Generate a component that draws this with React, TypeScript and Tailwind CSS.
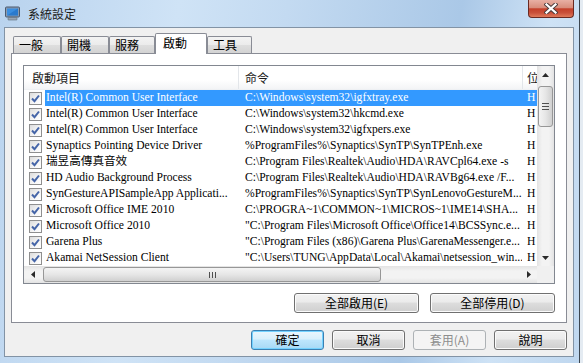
import React from 'react';

const rows: [string, string][] = [
  ['Intel(R) Common User Interface', String.raw`C:\Windows\system32\igfxtray.exe`],
  ['Intel(R) Common User Interface', String.raw`C:\Windows\system32\hkcmd.exe`],
  ['Intel(R) Common User Interface', String.raw`C:\Windows\system32\igfxpers.exe`],
  ['Synaptics Pointing Device Driver', String.raw`%ProgramFiles%\Synaptics\SynTP\SynTPEnh.exe`],
  ['瑞昱高傳真音效', String.raw`C:\Program Files\Realtek\Audio\HDA\RAVCpl64.exe -s`],
  ['HD Audio Background Process', String.raw`C:\Program Files\Realtek\Audio\HDA\RAVBg64.exe /F...`],
  ['SynGestureAPISampleApp Applicati...', String.raw`%ProgramFiles%\Synaptics\SynTP\SynLenovoGestureM...`],
  ['Microsoft Office IME 2010', String.raw`C:\PROGRA~1\COMMON~1\MICROS~1\IME14\SHA...`],
  ['Microsoft Office 2010', String.raw`"C:\Program Files\Microsoft Office\Office14\BCSSync.e...`],
  ['Garena Plus', String.raw`"C:\Program Files (x86)\Garena Plus\GarenaMessenger.e...`],
  ['Akamai NetSession Client', String.raw`"C:\Users\TUNG\AppData\Local\Akamai\netsession_win...`],
];

const tabs = [
  { label: '一般', w: 'w-[48px]' },
  { label: '開機', w: 'w-[48px]' },
  { label: '服務', w: 'w-[46px]' },
  { label: '啟動', w: 'w-[52px]', active: true },
  { label: '工具', w: 'w-[45px]' },
];

const CheckBox = () => (
  <div className="w-[13px] h-[13px] border border-[#8f8f8f] bg-[linear-gradient(135deg,#dcdcdc,#f6f6f6_60%,#ffffff)] flex items-center justify-center">
    <svg width="11" height="11" viewBox="0 0 11 11">
      <path d="M2 5.5 L4.5 8.2 L9 2.5" fill="none" stroke="#4565a8" strokeWidth="2" />
    </svg>
  </div>
);

const Arrow = ({ dir }: { dir: 'up' | 'down' | 'left' | 'right' }) => {
  const d = {
    up: 'M0 4 L3.5 0 L7 4 Z',
    down: 'M0 0 L7 0 L3.5 4 Z',
    left: 'M4 0 L4 7 L0 3.5 Z',
    right: 'M0 0 L4 3.5 L0 7 Z',
  }[dir];
  const horiz = dir === 'left' || dir === 'right';
  return (
    <svg width={horiz ? 4 : 7} height={horiz ? 7 : 4} viewBox={horiz ? '0 0 4 7' : '0 0 7 4'}>
      <path d={d} fill="#2b2b2b" />
    </svg>
  );
};

function Button({ label, variant = 'normal', w }: { label: string; variant?: 'normal' | 'default' | 'disabled'; w: string }) {
  const styles = {
    normal:
      'border-[#707070] bg-[linear-gradient(to_bottom,#f2f2f2_0%,#ebebeb_45%,#dddddd_50%,#cfcfcf_100%)] text-black shadow-[inset_0_0_0_1px_#fbfbfb]',
    default:
      'border-[#3c7fb1] bg-[linear-gradient(to_bottom,#eaf6fd_0%,#d9f0fc_45%,#bee6fd_50%,#a7d9f5_100%)] text-black shadow-[inset_0_0_0_1px_#74d2ff]',
    disabled: 'border-[#adb2b5] bg-[#f4f4f4] text-[#8d8d8d]',
  }[variant];
  return (
    <div className={`${w} h-[20px] rounded-[3px] border flex items-center justify-center text-[12px] leading-[16px] ${styles}`}>
      {label}
    </div>
  );
}

export default function App() {
  return (
    <div className="w-[583px] h-[363px] overflow-hidden flex font-['Noto_Sans_CJK_TC','Noto_Sans',sans-serif] text-black">
      <div className="w-[579px] h-full flex flex-col bg-[linear-gradient(100deg,#b9d3ee_0%,#cfe3f6_28%,#c3daf1_45%,#aac8e7_72%,#cee2f5_86%,#bfd7ef_100%)]">
        {/* title bar */}
        <div className="h-[27px] flex">
          <div className="flex items-center pl-[5px] gap-[8px] h-[27px]">
            <svg width="15" height="15" viewBox="0 0 15 15">
              <rect x="0.5" y="1" width="14" height="10" rx="1" fill="#8a9bb0" stroke="#4b5b70" />
              <rect x="2" y="2.5" width="11" height="7" fill="#3a8ee0" />
              <path d="M2 9.5 L13 2.5 L13 9.5 Z" fill="#1f6dc0" opacity="0.6" />
              <rect x="3" y="11.5" width="9" height="2.5" rx="0.5" fill="#9aa6b4" stroke="#5d6b7b" strokeWidth="0.6" />
            </svg>
            <span className="text-[12px] leading-[16px] text-[#1b1b1b] pt-[1px]">系統設定</span>
          </div>
          <div className="flex-1" />
          <div className="w-[46px] h-[18px] rounded-b-[4px] border border-t-0 border-[#6a2a22] bg-[linear-gradient(to_bottom,#e8b0a4_0%,#d88d7c_45%,#c4402a_52%,#c9503a_75%,#e07a5a_100%)] flex items-center justify-center">
            <svg width="14" height="11" viewBox="0 0 14 11">
              <path d="M2.5 1.5 L11.5 9.5 M11.5 1.5 L2.5 9.5" stroke="#4a3b3b" strokeWidth="4.2" strokeLinecap="square" />
              <path d="M2.5 1.5 L11.5 9.5 M11.5 1.5 L2.5 9.5" stroke="#ffffff" strokeWidth="2.3" strokeLinecap="square" />
            </svg>
          </div>
          <div className="w-[5px]" />
        </div>

        {/* middle */}
        <div className="flex h-[330px]">
          <div className="w-[4px]" />
          <div className="w-[570px] h-[330px] border border-[#8293a5] bg-[#f0f0f0] px-[6px] pt-[5px]">
            {/* tabs */}
            <div className="flex items-end h-[20px] pl-[2px]">
              {tabs.map((t) =>
                t.active ? (
                  <div
                    key={t.label}
                    className={`relative z-10 -mb-px ${t.w} h-[21px] border border-b-0 border-[#898c95] rounded-t-[2px] bg-white pl-[7px] pt-[1px] text-[12px] leading-[16px]`}
                  >
                    {t.label}
                  </div>
                ) : (
                  <div
                    key={t.label}
                    className={`${t.w} h-[17px] border border-b-0 border-[#898c95] rounded-t-[2px] bg-[linear-gradient(to_bottom,#f3f3f3_0%,#ebebeb_50%,#dedede_51%,#d3d3d3_100%)] pl-[5px] text-[12px] leading-[16px]`}
                  >
                    {t.label}
                  </div>
                )
              )}
            </div>

            {/* panel */}
            <div className="h-[270px] border border-[#898c95] bg-white pt-[11px] px-[11px]">
              <div className="w-[532px] h-[219px] border border-[#828790] bg-white flex flex-col">
                <div className="flex h-[200px]">
                  <div className="w-[513px] overflow-hidden flex flex-col">
                    {/* header */}
                    <div className="h-[24px] flex items-stretch bg-[linear-gradient(to_bottom,#ffffff_0%,#ffffff_60%,#f3f4f6_100%)] border-b border-[#eef0f3] text-[12px] text-[#1a1a1a]">
                      <div className="w-[214px] shrink-0 pl-[8px] flex items-center">啟動項目</div>
                      <div className="w-[284px] shrink-0 pl-[6px] flex items-center border-l border-[#e3e6ea]">命令</div>
                      <div className="w-[15px] shrink-0 pl-[4px] flex items-center border-l border-[#e3e6ea] overflow-hidden whitespace-nowrap">位</div>
                    </div>
                    {/* rows */}
                    <div className="font-['Liberation_Serif','Noto_Sans_CJK_TC',serif] text-[11.6px] leading-[16px]">
                      {rows.map(([name, cmd], i) => (
                        <div key={i} className="h-[16px] flex">
                          <div className="w-[21px] shrink-0 pl-[5px] flex items-center">
                            <CheckBox />
                          </div>
                          <div className={`flex w-[492px] shrink-0 ${i === 0 ? 'bg-[#3399ff] text-white' : ''}`}>
                            <div className="w-[193px] shrink-0 pl-[1px] whitespace-nowrap overflow-hidden">{name}</div>
                            <div className="w-[284px] shrink-0 pl-[7px] whitespace-nowrap overflow-hidden">{cmd}</div>
                            <div className="w-[15px] shrink-0 pl-[5px] whitespace-nowrap overflow-hidden">H</div>
                          </div>
                        </div>
                      ))}
                    </div>
                  </div>
                  {/* vertical scrollbar */}
                  <div className="w-[17px] h-[200px] flex flex-col bg-[linear-gradient(to_right,#e3e3e3,#f3f3f3_30%,#f3f3f3_70%,#e3e3e3)]">
                    <div className="h-[17px] flex items-center justify-center">
                      <Arrow dir="up" />
                    </div>
                    <div className="h-[3px]" />
                    <div className="mx-[1px] h-[41px] rounded-[3px] border border-[#979797] bg-[linear-gradient(to_right,#f4f4f4,#e6e6e6_50%,#d0d0d0)] flex flex-col items-center justify-center gap-[2px]">
                      <div className="w-[7px] h-[1px] bg-[#4f4f4f]" />
                      <div className="w-[7px] h-[1px] bg-[#4f4f4f]" />
                      <div className="w-[7px] h-[1px] bg-[#4f4f4f]" />
                    </div>
                    <div className="flex-1" />
                    <div className="h-[17px] flex items-center justify-center">
                      <Arrow dir="down" />
                    </div>
                  </div>
                </div>
                {/* horizontal scrollbar */}
                <div className="flex h-[17px]">
                  <div className="w-[513px] flex bg-[linear-gradient(to_bottom,#e3e3e3,#f3f3f3_30%,#f3f3f3_70%,#e3e3e3)]">
                    <div className="w-[17px] flex items-center justify-center">
                      <Arrow dir="left" />
                    </div>
                    <div className="w-[2px]" />
                    <div className="w-[338px] my-[1px] rounded-[3px] border border-[#979797] bg-[linear-gradient(to_bottom,#f4f4f4,#e6e6e6_50%,#d0d0d0)] flex items-center justify-center gap-[2px]">
                      <div className="w-[1px] h-[6px] bg-[#4f4f4f]" />
                      <div className="w-[1px] h-[6px] bg-[#4f4f4f]" />
                      <div className="w-[1px] h-[6px] bg-[#4f4f4f]" />
                    </div>
                    <div className="flex-1" />
                    <div className="w-[17px] flex items-center justify-center">
                      <Arrow dir="right" />
                    </div>
                  </div>
                  <div className="w-[17px] bg-[#f0f0f0]" />
                </div>
              </div>
              <div className="mt-[9px] flex justify-end gap-[11px]">
                <Button label="全部啟用(E)" w="w-[125px]" />
                <Button label="全部停用(D)" w="w-[125px]" />
              </div>
            </div>

            {/* bottom buttons */}
            <div className="mt-[7px] flex justify-end gap-[8px]">
              <Button label="確定" w="w-[73px]" variant="default" />
              <Button label="取消" w="w-[73px]" />
              <Button label="套用(A)" w="w-[73px]" variant="disabled" />
              <Button label="說明" w="w-[73px]" />
            </div>
          </div>
          <div className="w-[5px]" />
        </div>
        <div className="flex-1" />
      </div>
      <div className="w-[1px] h-full bg-[#3c4650]" />
      <div className="w-[3px] h-full bg-[#e4ebf2]" />
    </div>
  );
}
